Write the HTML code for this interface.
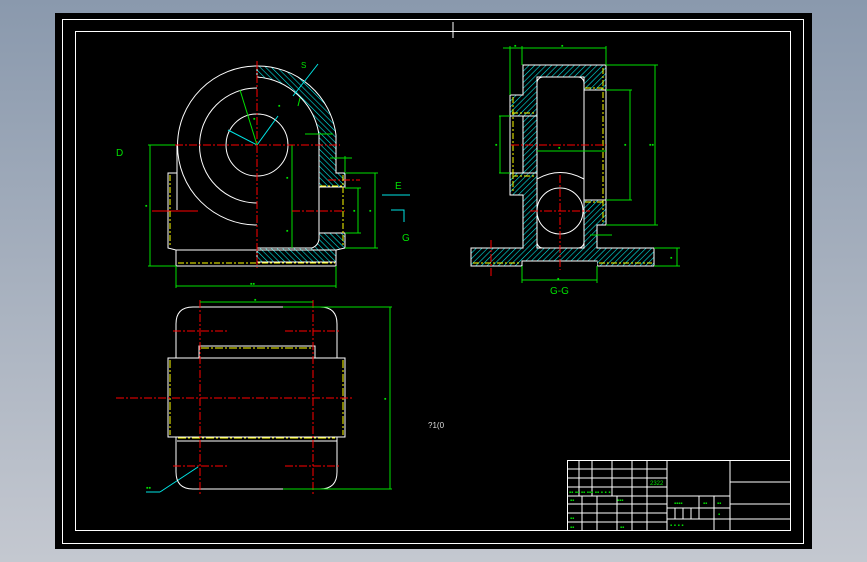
<!DOCTYPE html>
<html><head><meta charset="utf-8"><style>
html,body{margin:0;padding:0;width:867px;height:562px;overflow:hidden;background:linear-gradient(#8a99ad,#c4c8d0);}
svg{display:block}
text{font-family:"Liberation Sans","Noto Sans CJK SC",sans-serif;}
</style></head><body>
<svg width="867" height="562" viewBox="0 0 867 562" xmlns="http://www.w3.org/2000/svg">
<defs>
<pattern id="h" width="4" height="4" patternUnits="userSpaceOnUse" patternTransform="rotate(-45)">
<line x1="0" y1="0" x2="0" y2="4" stroke="#00e5e5" stroke-width="1.2"/>
</pattern>
<pattern id="h2" width="4" height="4" patternUnits="userSpaceOnUse" patternTransform="rotate(45)">
<line x1="0" y1="0" x2="0" y2="4" stroke="#00e5e5" stroke-width="1.2"/>
</pattern>
</defs>
<rect x="55" y="13" width="757" height="536" fill="#000"/>
<rect x="62.5" y="19.5" width="741" height="524" fill="none" stroke="#fff" stroke-width="1"/>
<rect x="75.5" y="31.5" width="715" height="499" fill="none" stroke="#fff" stroke-width="1"/>
<line x1="453" y1="22" x2="453" y2="38" stroke="#fff"/>

<!-- FRONT VIEW -->
<g fill="none" stroke="#fff" stroke-width="1">
<path d="M257,66 A79,79 0 0 1 336,135 L336,173 L345,173 L345,187 L319,187 L319,135 A68,68 0 0 0 257,77 Z" fill="url(#h)"/>
<path d="M319,233 L345,233 L345,248 L336,250 L336,262 L257,262 L257,248 L312,248 Q319,245 319,238 Z" fill="url(#h)"/>
<path d="M257,66 A79.5,79.5 0 0 0 257,225"/>
<path d="M257,88 A57,57 0 0 0 257,203"/>
<circle cx="257" cy="145" r="31"/>
<path d="M177,145 L177,210"/>
<path d="M177,173 L168,173 L168,248 L176,250 L176,266 L336,266 L336,250"/>
<path d="M176,250 L336,250"/>
<path d="M319,187 L319,233"/>
</g>
<g stroke="#00e5e5" stroke-width="1">
<line x1="257" y1="145" x2="278" y2="116"/>
<line x1="257" y1="145" x2="228" y2="130"/>
<line x1="293" y1="96" x2="318" y2="64"/>
<line x1="382" y1="195" x2="410" y2="195"/>
<polyline points="391,210 404,210 404,222" fill="none"/>
<line x1="146" y1="492" x2="160" y2="492"/>
<line x1="160" y1="492" x2="198" y2="467"/>
</g>
<g stroke="#00e000" stroke-width="1" fill="none">
<line x1="150" y1="145" x2="150" y2="266"/>
<line x1="148" y1="145" x2="177" y2="145"/>
<line x1="148" y1="266" x2="176" y2="266"/>
<line x1="176" y1="286" x2="336" y2="286"/>
<line x1="176" y1="266" x2="176" y2="288"/>
<line x1="336" y1="266" x2="336" y2="288"/>
<line x1="375" y1="173" x2="375" y2="248"/>
<line x1="345" y1="173" x2="378" y2="173"/>
<line x1="345" y1="248" x2="378" y2="248"/>
<line x1="358" y1="188" x2="358" y2="233"/>
<line x1="345" y1="188" x2="361" y2="188"/>
<line x1="345" y1="233" x2="361" y2="233"/>
<line x1="292" y1="145" x2="292" y2="248"/>
<line x1="240" y1="90" x2="257" y2="145"/>
<line x1="298" y1="106" x2="300" y2="98"/>
<line x1="305" y1="134" x2="333" y2="134"/>
<line x1="330" y1="158" x2="352" y2="158"/>
<line x1="345" y1="156" x2="345" y2="172"/>
</g>
<g stroke="#f00" stroke-width="1" stroke-dasharray="8,2,2,2" fill="none">
<line x1="257" y1="61" x2="257" y2="268"/>
<line x1="175" y1="145" x2="340" y2="145"/>
<line x1="292" y1="211" x2="345" y2="211"/>
<line x1="328" y1="180" x2="360" y2="180"/>
</g>
<line x1="152" y1="211" x2="198" y2="211" stroke="#f00"/>
<g stroke="#ff0" stroke-width="1" stroke-dasharray="6,2,2,2">
<line x1="170" y1="175" x2="170" y2="247"/>
<line x1="343" y1="175" x2="343" y2="247"/>
<line x1="178" y1="263" x2="335" y2="263"/>
<line x1="320" y1="186" x2="344" y2="186"/>
</g>
<g fill="#00e000" font-size="7">
<text x="116" y="156" font-size="10">D</text>
<text x="395" y="189" font-size="10">E</text>
<text x="402" y="241" font-size="10">G</text>
<text x="250" y="286">▪▪</text>
<text x="145" y="208">▪</text>
<text x="253" y="121">▪</text>
<text x="278" y="108">▪</text>
<text x="286" y="180">▪</text>
<text x="286" y="233">▪</text>
<text x="353" y="213">▪</text>
<text x="369" y="213">▪</text>
<text x="301" y="68" font-size="8">S</text>
</g>

<!-- SIDE VIEW G-G -->
<g fill="none" stroke="#fff" stroke-width="1">
<path d="M523,65 L606,65 L606,90 L584,90 L584,77 L537,77 L537,248 L584,248 L584,200 L606,200 L606,225 L597,225 L597,248 L654,248 L654,266 L597,266 L597,261 L522,261 L522,266 L471,266 L471,248 L523,248 L523,195 L510,195 L510,173 L523,173 L523,116 L510,116 L510,95 L523,95 Z" fill="url(#h2)"/>
<rect x="537" y="77" width="47" height="171" rx="6" fill="#000"/>
<rect x="584" y="90" width="22" height="110" fill="#000"/>
<rect x="510" y="116" width="13" height="57" fill="#000"/>
<rect x="523" y="261" width="74" height="6" fill="#000" stroke="none"/>
<line x1="523" y1="261" x2="597" y2="261"/>
<line x1="510" y1="116" x2="537" y2="116"/>
<line x1="510" y1="173" x2="537" y2="173"/>
<circle cx="560" cy="211" r="23"/>
<path d="M537,179 Q560,166 584,179"/>
<line x1="606" y1="90" x2="606" y2="200"/>
</g>
<g stroke="#ff0" stroke-width="1" stroke-dasharray="6,2,2,2">
<line x1="603" y1="68" x2="603" y2="223"/>
<line x1="513" y1="97" x2="513" y2="193"/>
<line x1="512" y1="113" x2="536" y2="113"/>
<line x1="512" y1="176" x2="536" y2="176"/>
<line x1="585" y1="88" x2="605" y2="88"/>
<line x1="585" y1="202" x2="605" y2="202"/>
<line x1="473" y1="263" x2="521" y2="263"/>
<line x1="599" y1="263" x2="652" y2="263"/>
</g>
<g stroke="#00e000" stroke-width="1" fill="none">
<line x1="503" y1="48" x2="606" y2="48"/>
<line x1="510" y1="46" x2="510" y2="95"/>
<line x1="522" y1="46" x2="522" y2="65"/>
<line x1="606" y1="46" x2="606" y2="65"/>
<line x1="606" y1="65" x2="658" y2="65"/>
<line x1="606" y1="225" x2="658" y2="225"/>
<line x1="655" y1="65" x2="655" y2="225"/>
<line x1="606" y1="90" x2="632" y2="90"/>
<line x1="606" y1="200" x2="632" y2="200"/>
<line x1="630" y1="90" x2="630" y2="200"/>
<line x1="499" y1="116" x2="510" y2="116"/>
<line x1="499" y1="173" x2="510" y2="173"/>
<line x1="500" y1="116" x2="500" y2="173"/>
<line x1="537" y1="151" x2="606" y2="151"/>
<line x1="522" y1="266" x2="522" y2="283"/>
<line x1="597" y1="266" x2="597" y2="283"/>
<line x1="522" y1="280" x2="597" y2="280"/>
<line x1="654" y1="248" x2="680" y2="248"/>
<line x1="654" y1="266" x2="680" y2="266"/>
<line x1="677" y1="248" x2="677" y2="266"/>
<line x1="590" y1="235" x2="612" y2="235"/>
</g>
<g stroke="#f00" stroke-width="1" stroke-dasharray="8,2,2,2">
<line x1="511" y1="145" x2="606" y2="145"/>
<line x1="530" y1="211" x2="590" y2="211"/>
<line x1="560" y1="175" x2="560" y2="270"/>
<line x1="491" y1="240" x2="491" y2="278"/>
</g>
<g fill="#00e000" font-size="7">
<text x="550" y="294" font-size="10">G-G</text>
<text x="514" y="48">▪</text>
<text x="561" y="48">▪</text>
<text x="495" y="147">▪</text>
<text x="558" y="150">▪</text>
<text x="624" y="147">▪</text>
<text x="649" y="147">▪▪</text>
<text x="557" y="281">▪</text>
<text x="670" y="260">▪</text>
</g>

<!-- TOP VIEW -->
<g fill="none" stroke="#fff" stroke-width="1">
<path d="M193,307 L320,307 Q337,307 337,324 L337,358 M176,358 L176,324 Q176,307 193,307"/>
<path d="M176,437 L176,472 Q176,489 193,489 L320,489 Q337,489 337,472 L337,437"/>
<rect x="168" y="358" width="177" height="79"/>
<path d="M199,358 L199,346 L315,346 L315,358"/>
<line x1="177" y1="441" x2="337" y2="441"/>
</g>
<g stroke="#ff0" stroke-width="1" stroke-dasharray="8,2,2,2">
<line x1="201" y1="348" x2="313" y2="348"/>
<line x1="178" y1="438" x2="335" y2="438"/>
<line x1="170" y1="360" x2="170" y2="435"/>
<line x1="343" y1="360" x2="343" y2="435"/>
</g>
<g stroke="#f00" stroke-width="1" stroke-dasharray="8,2,2,2">
<line x1="116" y1="398" x2="354" y2="398"/>
<line x1="200" y1="300" x2="200" y2="494"/>
<line x1="313" y1="300" x2="313" y2="494"/>
<line x1="173" y1="331" x2="228" y2="331"/>
<line x1="285" y1="331" x2="340" y2="331"/>
<line x1="173" y1="466" x2="228" y2="466"/>
<line x1="285" y1="466" x2="340" y2="466"/>
</g>
<g stroke="#00e000" stroke-width="1">
<line x1="200" y1="302" x2="313" y2="302"/>
<line x1="283" y1="307" x2="392" y2="307"/>
<line x1="283" y1="489" x2="392" y2="489"/>
<line x1="390" y1="307" x2="390" y2="489"/>
</g>
<g fill="#00e000" font-size="7">
<text x="254" y="302">▪</text>
<text x="384" y="401">▪</text>
<text x="146" y="490">▪▪</text>
</g>
<text x="428" y="428" fill="#ddd" font-size="8">?1(0</text>

<!-- TITLE BLOCK -->
<g stroke="#fff" stroke-width="1" fill="none">
<rect x="567.5" y="460.5" width="223" height="70"/>
<line x1="567" y1="469" x2="667" y2="469"/>
<line x1="567" y1="478" x2="667" y2="478"/>
<line x1="567" y1="487" x2="667" y2="487"/>
<line x1="567" y1="496" x2="730" y2="496"/>
<line x1="567" y1="504" x2="667" y2="504"/>
<line x1="567" y1="513" x2="667" y2="513"/>
<line x1="567" y1="522" x2="667" y2="522"/>
<line x1="579" y1="460" x2="579" y2="496"/>
<line x1="592" y1="460" x2="592" y2="496"/>
<line x1="612" y1="460" x2="612" y2="496"/>
<line x1="632" y1="460" x2="632" y2="530"/>
<line x1="647" y1="460" x2="647" y2="530"/>
<line x1="667" y1="460" x2="667" y2="530"/>
<line x1="582" y1="496" x2="582" y2="530"/>
<line x1="597" y1="496" x2="597" y2="530"/>
<line x1="617" y1="496" x2="617" y2="530"/>
<line x1="730" y1="460" x2="730" y2="530"/>
<line x1="667" y1="508" x2="730" y2="508"/>
<line x1="667" y1="519" x2="730" y2="519"/>
<line x1="699" y1="496" x2="699" y2="519"/>
<line x1="714" y1="496" x2="714" y2="530"/>
<line x1="675" y1="508" x2="675" y2="519"/>
<line x1="683" y1="508" x2="683" y2="519"/>
<line x1="691" y1="508" x2="691" y2="519"/>
<line x1="730" y1="482" x2="791" y2="482"/>
<line x1="730" y1="504" x2="791" y2="504"/>
<line x1="730" y1="519" x2="791" y2="519"/>
</g>
<g fill="#00e000" font-size="6">
<text x="650" y="485">2322</text>
<text x="569" y="494">▪▪ ▪▪ ▪▪ ▪▪▪ ▪▪ ▪ ▪ ▪</text>
<text x="570" y="502">▪▪</text>
<text x="617" y="502">▪▪▪</text>
<text x="570" y="520">▪▪</text>
<text x="570" y="529">▪▪</text>
<text x="620" y="529">▪▪</text>
<text x="674" y="505">▪▪▪▪</text>
<text x="703" y="505">▪▪</text>
<text x="717" y="505">▪▪</text>
<text x="718" y="516">▪</text>
<text x="670" y="527">▪    ▪    ▪    ▪</text>
</g>
</svg>
</body></html>
